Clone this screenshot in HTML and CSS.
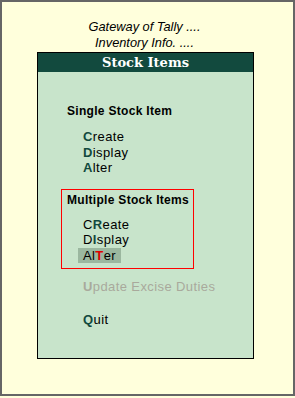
FILE: index.html
```html
<!DOCTYPE html>
<html lang="en">
<head>
  <meta charset="UTF-8">
  <title>Stock Items</title>
  <link rel="stylesheet" href="styles.css">
</head>
<body>
  <div class="frame">
    <div class="crumbs">
      <div>Gateway of Tally ....</div>
      <div>Inventory Info. ....</div>
    </div>

    <div class="panel">
      <div class="title">Stock Items</div>
      <div class="panel-body">
        <div class="group single">
          <div class="group-title">Single Stock Item</div>
          <ul class="menu">
            <li><b>C</b>reate</li>
            <li><b>D</b>isplay</li>
            <li><b>A</b>lter</li>
          </ul>
        </div>

        <div class="group boxed">
          <div class="group-title">Multiple Stock Items</div>
          <ul class="menu">
            <li>C<b>R</b>eate</li>
            <li>D<b>I</b>splay</li>
            <li class="selected">Al<b>T</b>er</li>
          </ul>
        </div>

        <ul class="menu extra">
          <li class="disabled"><b>U</b>pdate Excise Duties</li>
        </ul>
        <ul class="menu quit">
          <li><b>Q</b>uit</li>
        </ul>
      </div>
    </div>
  </div>
</body>
</html>
```

FILE: styles.css
```css
body {
  margin: 0;
  padding: 0;
  background-color: #ffffdc;
  font-family: 'Liberation Sans', Arial, sans-serif;
  color: #000;
}

.frame {
  width: 291px;
  height: 392px;
  border: 2px solid #666;
  background-color: #ffffdc;
}

.crumbs {
  padding: 17px 6px 0 0;
  text-align: center;
  font-style: italic;
  font-size: 12.8px;
  line-height: 16px;
}

.panel {
  width: 215px;
  margin: 1px 0 0 35px;
  border: 1px solid #000;
  background-color: #c8e4cb;
}

.title {
  background-color: #124a3e;
  color: #fff;
  text-align: center;
  font-family: 'DejaVu Serif', serif;
  font-weight: bold;
  font-size: 13px;
  line-height: 19px;
  height: 19px;
}

.panel-body {
  padding: 32px 0 31px 29px;
}

.group-title {
  font-weight: bold;
  font-size: 12px;
  line-height: 15px;
  letter-spacing: 0.3px;
}

.menu {
  list-style: none;
  margin: 10px 0 0 16px;
  padding: 0;
  font-size: 13px;
  line-height: 15.5px;
  letter-spacing: 0.4px;
}

.menu b {
  color: #124a3e;
}

.boxed {
  width: 126px;
  margin: 13px 0 0 -6px;
  padding: 3px 0 5px 5px;
  border: 1px solid #ff0000;
}

.boxed .menu {
  margin-top: 9px;
}

.menu li.selected {
  display: inline-block;
  background-color: #9bb79f;
  margin-left: -5px;
  padding: 0 5px 0 5px;
}

.menu li.selected b {
  color: #e00000;
}

.menu.extra {
  margin-top: 10px;
}

.menu li.disabled,
.menu li.disabled b {
  color: #a9a99c;
}

.menu.quit {
  margin-top: 17px;
}
```
